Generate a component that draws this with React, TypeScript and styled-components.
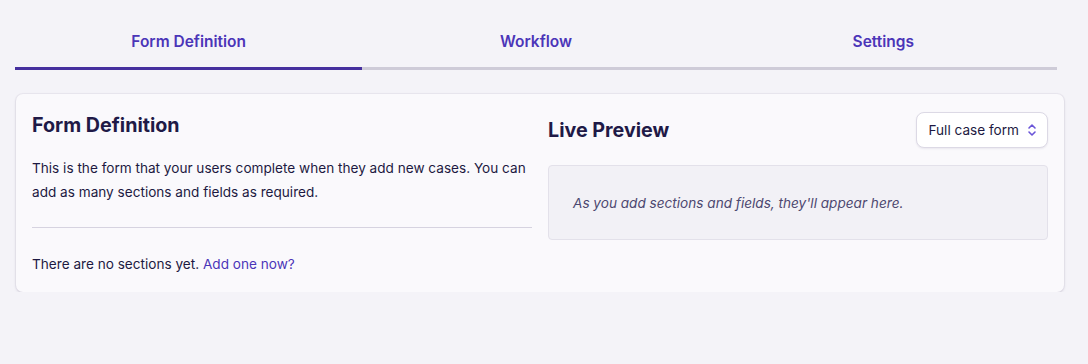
import styled, { createGlobalStyle } from "styled-components"

const GlobalStyle = createGlobalStyle`
  html, body {
    margin: 0;
    padding: 0;
    background: #f4f3f8;
    font-family: Inter, "Noto Sans", sans-serif;
    color: #1d1942;
  }
`

const tabs = ["Form Definition", "Workflow", "Settings"]

export default function App() {
  return (
    <>
      <GlobalStyle />
      <Page>
        <TabBar>
          {tabs.map((t, i) => (
            <Tab key={t} $active={i === 0}>{t}</Tab>
          ))}
        </TabBar>
        <Card>
          <Column>
            <Title>Form Definition</Title>
            <Text>
              This is the form that your users complete when they add new cases. You can
              add as many sections and fields as required.
            </Text>
            <Divider />
            <Text>
              There are no sections yet. <Link href="#">Add one now?</Link>
            </Text>
          </Column>
          <Column>
            <PreviewHeader>
              <Title>Live Preview</Title>
              <Select>
                Full case form
                <svg width="10" height="14" viewBox="0 0 10 14" fill="none">
                  <path d="M2 5l3-3 3 3M2 9l3 3 3-3" stroke="#6a55d8" strokeWidth="1.6" strokeLinecap="round" strokeLinejoin="round" />
                </svg>
              </Select>
            </PreviewHeader>
            <PreviewBox>As you add sections and fields, they'll appear here.</PreviewBox>
          </Column>
        </Card>
      </Page>
    </>
  )
}

const Page = styled.div`
  padding: 22px 24px 0 15px;
  display: flex;
  flex-direction: column;
  gap: 24px;
`
const TabBar = styled.div`
  display: grid;
  grid-template-columns: repeat(3, 1fr);
  width: 1042px;
`
const Tab = styled.div<{ $active?: boolean }>`
  text-align: center;
  font-size: 15.5px;
  font-weight: 600;
  color: #4b35b8;
  padding: 10px 0 16px;
  border-bottom: 3px solid ${p => (p.$active ? "#452f9e" : "#cecbd8")};
`
const Card = styled.div`
  width: 1048px;
  margin-left: 1px;
  box-sizing: border-box;
  background: #faf9fc;
  border-radius: 7px;
  box-shadow: 0 1px 3px rgba(40, 30, 80, 0.14), 0 0 0 1px rgba(40, 30, 80, 0.04);
  padding: 16px 16px 16px;
  display: grid;
  grid-template-columns: 1fr 1fr;
  gap: 16px;
`
const Column = styled.div`
  display: flex;
  flex-direction: column;
`
const Title = styled.h2`
  margin: 3px 0 0;
  font-size: 19.7px;
  font-weight: 700;
  color: #1f1a47;
  line-height: 24px;
`
const Text = styled.p`
  margin: 0;
  font-size: 13.6px;
  line-height: 24px;
  color: #1d1942;
  &:first-of-type {
    margin-top: 19px;
  }
`
const Divider = styled.hr`
  border: none;
  border-top: 1px solid #d6d3e0;
  margin: 23px 0 24px;
`
const Link = styled.a`
  color: #4b35b8;
  text-decoration: none;
`
const PreviewHeader = styled.div`
  display: flex;
  align-items: center;
  justify-content: space-between;
  margin: 2px 0 17px;
  ${Title} {
    margin: 0;
  }
`
const Select = styled.button`
  height: 36px;
  padding: 0 10px 0 12px;
  display: flex;
  align-items: center;
  gap: 8px;
  background: #ffffff;
  border: 1px solid #dcd9e5;
  border-radius: 8px;
  box-shadow: 0 1px 2px rgba(40, 30, 80, 0.08);
  font-family: Inter, "Noto Sans", sans-serif;
  font-size: 13.6px;
  color: #1d1942;
`
const PreviewBox = styled.div`
  height: 75px;
  box-sizing: border-box;
  background: #f2f1f6;
  border: 1px solid #e3e1ea;
  border-radius: 4px;
  padding: 0 24px;
  display: flex;
  align-items: center;
  font-style: italic;
  font-size: 13.6px;
  color: #4d4870;
`
